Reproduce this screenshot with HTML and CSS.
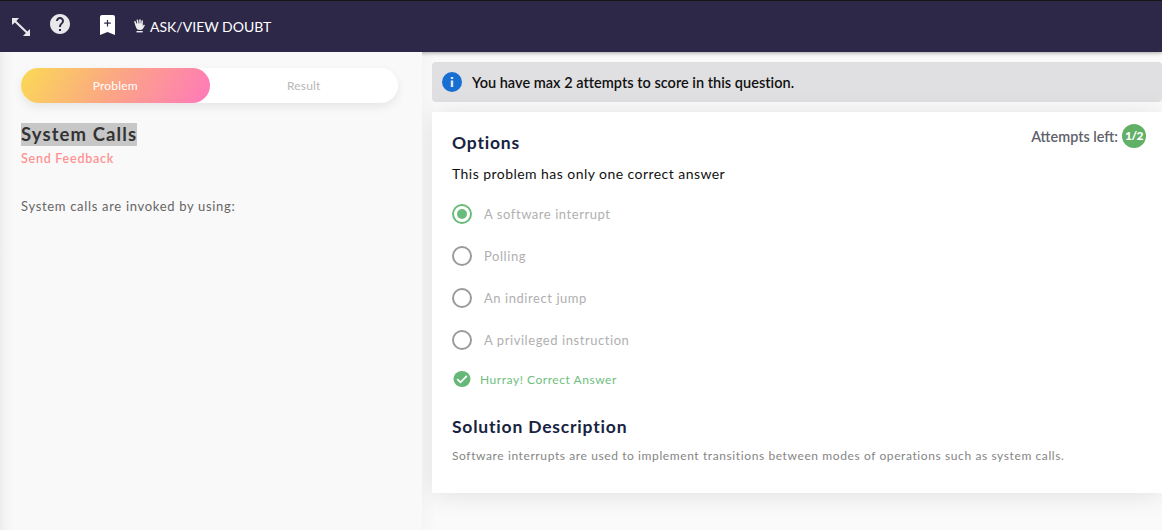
FILE: index.html
```html
<!DOCTYPE html>
<html lang="en">
<head>
<meta charset="utf-8">
<title>System Calls</title>
<link rel="stylesheet" href="styles.css">
</head>
<body>
<header class="topbar">
  <svg class="icon-resize" width="20" height="20" viewBox="0 0 20 20"><path d="M1 1h7L5.400 3.900l11 10.700L19 12v7h-7l2.900-2.900-11-10.700L1 8z" fill="#e8e8ea"/></svg>
  <svg class="icon-help" width="20" height="20" viewBox="2 2 20 20"><path d="M12 2C6.480 2 2 6.480 2 12s4.480 10 10 10 10-4.480 10-10S17.520 2 12 2zm1 17h-2v-2h2v2zm2.070-7.750l-.9.920C13.450 12.900 13 13.500 13 15h-2v-.5c0-1.100.45-2.100 1.170-2.830l1.240-1.260c.37-.36.59-.86.59-1.410 0-1.100-.9-2-2-2s-2 .9-2 2H8c0-2.210 1.790-4 4-4s4 1.790 4 4c0 .88-.36 1.680-.93 2.250z" fill="#e8e8ea"/></svg>
  <svg class="icon-bookmark" width="15" height="20" viewBox="0 0 15 20"><path d="M2 0h11q2 0 2 2v18l-7.500-3L0 20V2q0-2 2-2z" fill="#fff"/><path d="M7.500 5v6.500M4.200 8.200h6.600" stroke="#2d2848" stroke-width="1.200"/></svg>
  <svg class="icon-hand" width="11" height="14" viewBox="0 0 11 14"><path d="M2.300 7L1 2.700M4.100 6L3.400 1.200M6 6V1M7.800 6.500l.4-4.500" stroke="#eee" stroke-width="1.500" stroke-linecap="round"/><path d="M1.600 4.500h6.900v2.800l1.300-1.500q1.200-.2 1 .7L8.800 10q-1 1-3 1-3 0-3.600-2z" fill="#eee"/><path d="M2.500 12.700h6.200" stroke="#eee" stroke-width="1.400"/></svg>
  <span class="doubt">ASK/VIEW DOUBT</span>
</header>
<main class="content">
  <section class="problem">
    <nav class="tabs"><div class="tab tab-active"><span>Problem</span></div><div class="tab"><span>Result</span></div></nav>
    <h1 class="title"><span class="selected">System Calls</span></h1>
    <div class="feedback"><span>Send Feedback</span></div>
    <p class="statement"><span>System calls are invoked by using:</span></p>
  </section>
  <section class="answer">
    <div class="notice">
      <svg width="20" height="20" viewBox="0 0 20 20"><circle cx="10" cy="10" r="10" fill="#176fd3"/><path d="M10 5v2M10 8.500V15" stroke="#e4e8ee" stroke-width="2.400"/></svg>
      <span class="notice-text">You have max 2 attempts to score in this question.</span>
    </div>
    <div class="card">
      <div class="card-head"><h2 class="heading heading-options"><span>Options</span></h2><div class="attempts"><span class="attempts-label">Attempts left:</span><b class="badge">1/2</b></div></div>
      <p class="hint"><span>This problem has only one correct answer</span></p>
      <div class="choices">
        <div class="choice"><i class="radio radio-on"></i><span>A software interrupt</span></div>
        <div class="choice"><i class="radio"></i><span>Polling</span></div>
        <div class="choice"><i class="radio"></i><span>An indirect jump</span></div>
        <div class="choice"><i class="radio"></i><span>A privileged instruction</span></div>
      </div>
      <div class="verdict"><svg width="18" height="16" viewBox="0 0 18 16"><ellipse cx="9" cy="8" rx="8.500" ry="8" fill="#65b877"/><path d="M4.200 8.200l3.300 3.200 6.400-6.600" fill="none" stroke="#fff" stroke-width="1.700"/></svg><span>Hurray! Correct Answer</span></div>
      <h2 class="heading heading-solution"><span>Solution Description</span></h2>
      <p class="solution"><span>Software interrupts are used to implement transitions between modes of operations such as system calls.</span></p>
    </div>
  </section>
</main>
</body>
</html>
```
FILE: styles.css
```css
* { box-sizing: border-box; }
body { margin: 0; height: 530px; overflow: hidden; font-family: Lato, "Open Sans", sans-serif; background: #fafafa; }
h1, h2, p { margin: 0; }
svg { display: block; flex: none; }
span { white-space: nowrap; }
.topbar { position: relative; z-index: 1; display: flex; align-items: flex-start; height: 52px; background: #2d2848; border-top: 1px solid #141414; box-shadow: 0 1px 4px rgba(0,0,0,.35); padding-left: 11px; }
.icon-resize { margin-top: 16px; }
.icon-help { margin: 13px 0 0 19px; }
.icon-bookmark { margin: 14px 0 0 30px; }
.icon-hand { margin: 18px 0 0 19px; }
.doubt { margin: 16px 0 0 5px; line-height: 20px; font-size: 14px; color: #fff; }
.content { display: flex; height: 478px; }
.problem { position: relative; z-index: 2; width: 422px; padding: 16px 24px 0 21px; background: linear-gradient(90deg, #ededed 0, #f5f5f5 6px, #f9f9f9 14px); }
.tabs { display: flex; width: 377px; height: 35px; border-radius: 18px; background: #fff; box-shadow: 0 4px 10px rgba(0,0,0,.08); }
.tab { flex: 1; border-radius: 18px; line-height: 36px; text-align: center; font-size: 12px; letter-spacing: .2px; color: #b8b8b8; }
.tab-active { color: #fff; background: linear-gradient(120deg, #fbda55, #fba783 48%, #ff7db5 95%); }
.title { margin-top: 20px; font-size: 18.500px; line-height: 23px; letter-spacing: 1.100px; color: #333; }
.selected { display: inline-block; background: #c7c7c7; }
.feedback { margin-top: 5px; line-height: 16px; font-size: 12.500px; font-weight: 600; letter-spacing: .750px; color: #ff9292; }
.statement { margin-top: 29px; line-height: 20px; font-size: 13px; letter-spacing: .680px; color: #666; }
.answer { flex: 1; padding: 10px 0 0 10px; background: linear-gradient(90deg, #f5f5f5, #fafafa 14px); }
.notice { display: flex; align-items: center; gap: 10px; height: 40px; padding-left: 10px; border-radius: 4px; background: #e0e0e2; }
.notice-text { font-size: 14.500px; font-weight: 600; letter-spacing: .020px; color: #111; }
.card { height: 381px; margin-top: 10px; padding: 12px 16px 0 20px; background: #fff; box-shadow: 0 2px 24px rgba(0,0,0,.1); }
.card-head { display: flex; justify-content: space-between; align-items: flex-start; height: 40px; }
.heading { font-size: 17.500px; line-height: 22px; letter-spacing: .800px; color: #172340; }
.heading-options { margin-top: 8px; }
.attempts { display: flex; align-items: center; gap: 4px; font-size: 14.400px; font-weight: 600; color: #61616b; }
.badge { width: 24px; height: 24px; border-radius: 50%; background: #62b066; color: #fff; font-size: 12px; line-height: 24px; letter-spacing: -.5px; text-align: center; }
.hint { line-height: 20px; font-size: 14px; letter-spacing: .450px; color: #111; }
.choices { display: grid; gap: 22px; margin-top: 20px; }
.choice { display: flex; align-items: center; gap: 12px; height: 20px; font-size: 13px; letter-spacing: .560px; color: #b0b0b0; }
.radio { display: grid; place-items: center; width: 20px; height: 20px; border: 2px solid #9b9b9b; border-radius: 50%; }
.radio-on { border-color: #6abb7c; }
.radio-on::after { content: ""; width: 10px; height: 10px; border-radius: 50%; background: #6abb7c; }
.verdict { display: flex; align-items: center; gap: 9px; height: 18px; margin: 20px 0 0 1px; font-size: 12px; line-height: 15px; letter-spacing: .540px; color: #6fbe80; }
.heading-solution { margin-top: 28px; }
.solution { margin-top: 9px; line-height: 18px; font-size: 12px; letter-spacing: .600px; color: #858585; }
```
